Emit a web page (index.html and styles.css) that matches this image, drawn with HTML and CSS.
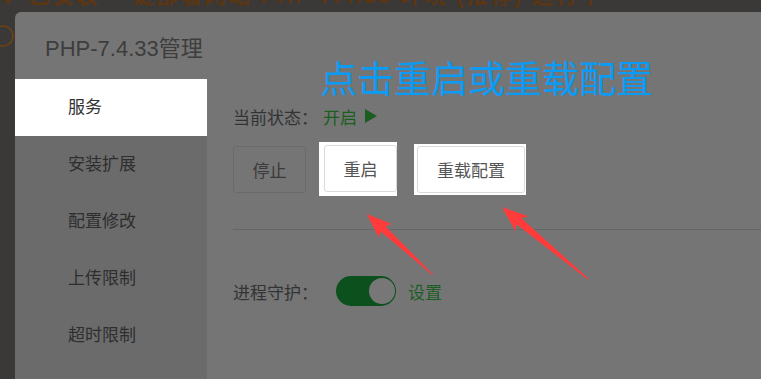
FILE: index.html
```html
<!DOCTYPE html>
<html lang="zh-CN">
<head>
    <meta charset="UTF-8">
    <meta name="viewport" content="width=device-width, initial-scale=1.0">
    <title>PHP-7.4.33管理</title>
    <link rel="stylesheet" href="styles.css">
</head>
<body>
    <div class="topbar">
        <span class="topbar-text">✓ 已安装 一键部署网站 PHP 7.4.33 环境 (推荐) 运行中</span>
    </div>
    <div class="screen">
        <div class="side-strip">
            <svg class="strip-icon" width="15" height="24" viewBox="0 0 15 24">
                <circle cx="3" cy="12" r="10" fill="none" stroke="#6e4215" stroke-width="1.5"/>
            </svg>
        </div>
        <div class="modal">
            <div class="modal-header">PHP-7.4.33管理</div>
            <div class="modal-body">
                <ul class="menu">
                    <li class="menu-item active">服务</li>
                    <li class="menu-item">安装扩展</li>
                    <li class="menu-item">配置修改</li>
                    <li class="menu-item">上传限制</li>
                    <li class="menu-item">超时限制</li>
                </ul>
                <div class="content">
                    <div class="status-row">
                        <span class="label">当前状态：</span>
                        <span class="status-on">开启</span>
                        <span class="play"></span>
                    </div>
                    <div class="button-row">
                        <button class="btn">停止</button>
                        <div class="spot spot-restart"><button class="btn btn-light">重启</button></div>
                        <div class="spot spot-reload"><button class="btn btn-light btn-wide">重载配置</button></div>
                    </div>
                    <div class="divider"></div>
                    <div class="daemon-row">
                        <span class="label">进程守护：</span>
                        <span class="switch"><span class="knob"></span></span>
                        <span class="link">设置</span>
                    </div>
                </div>
            </div>
        </div>
    </div>

    <div class="note">点击重启或重载配置</div>
    <svg class="arrows" width="761" height="379" viewBox="0 0 761 379">
        <polygon fill="#ff3b3b" transform="translate(433 275) rotate(-137.3)" points="0,-0.5 68,-3.5 65,-9.5 90,0 65,9.5 68,3.5 0,0.5"/>
        <polygon fill="#ff3b3b" transform="translate(588 279) rotate(-140.1)" points="0,-0.5 90,-4 86,-10 112,0 86,10 90,4 0,0.5"/>
    </svg>
</body>
</html>
```

FILE: styles.css
```css
body {
    margin: 0;
    width: 761px;
    height: 379px;
    overflow: hidden;
    background-color: #3a3937;
    font-family: "Liberation Sans", "Noto Sans CJK SC", sans-serif;
    position: relative;
}
.topbar {
    height: 12px;
    overflow: hidden;
    padding-left: 2px;
}
.topbar-text {
    display: block;
    margin-top: -16px;
    font-size: 22px;
    font-weight: bold;
    line-height: 24px;
    color: #5c3512;
    white-space: nowrap;
    letter-spacing: 2px;
}
.screen {
    display: flex;
    height: 367px;
}
.side-strip {
    width: 15px;
    padding-top: 12px;
}
.strip-icon {
    display: block;
}
.modal {
    flex: 1;
    background-color: #757575;
    border-top-left-radius: 6px;
    display: flex;
    flex-direction: column;
}
.modal-header {
    height: 67px;
    display: flex;
    align-items: center;
    padding-left: 30px;
    font-size: 22px;
    color: #3d3d3d;
}
.modal-body {
    flex: 1;
    display: flex;
}
.menu {
    list-style: none;
    margin: 0;
    padding: 0;
    width: 192px;
    background-color: #6b6b6b;
}
.menu-item {
    height: 57px;
    line-height: 57px;
    padding-left: 53px;
    font-size: 17px;
    color: #2e2e2e;
}
.menu-item.active {
    background-color: #fff;
    color: #333;
}
.content {
    flex: 1;
    padding-top: 26px;
    padding-left: 26px;
}
.label {
    font-size: 17px;
    color: #333;
}
.status-row {
    display: flex;
    align-items: center;
    height: 22px;
}
.status-on {
    font-size: 17px;
    color: #1a5e20;
    margin-left: 5px;
}
.play {
    width: 0;
    height: 0;
    border-top: 7px solid transparent;
    border-bottom: 7px solid transparent;
    border-left: 12px solid #1a5e20;
    margin-left: 8px;
}
.button-row {
    display: flex;
    align-items: center;
    height: 54px;
    margin-top: 15px;
}
.btn {
    width: 73px;
    height: 47px;
    border: 1px solid #6a6a6a;
    border-radius: 3px;
    background-color: transparent;
    font-family: inherit;
    font-size: 17px;
    color: #3a3a3a;
    padding: 0;
}
.spot {
    background-color: #fff;
}
.spot-restart {
    margin-left: 13px;
    padding: 3px 0 4px 5px;
}
.spot-reload {
    margin-left: 17px;
    padding: 2px 1px 2px 3px;
}
.btn-light {
    border-color: #d9d9df;
    color: #555;
    display: block;
}
.btn-wide {
    width: 108px;
}
.divider {
    height: 1px;
    background-color: #666;
    margin-top: 33px;
}
.daemon-row {
    display: flex;
    align-items: center;
    height: 30px;
    margin-top: 46px;
}
.switch {
    width: 60px;
    height: 30px;
    border-radius: 15px;
    background-color: #0c501e;
    margin-left: 18px;
    display: flex;
    justify-content: flex-end;
    align-items: center;
    padding-right: 1px;
    box-sizing: border-box;
}
.knob {
    width: 26px;
    height: 26px;
    border-radius: 50%;
    background-color: #777;
}
.link {
    font-size: 17px;
    color: #1d5e26;
    margin-left: 12px;
}
.note {
    position: absolute;
    left: 320px;
    top: 55px;
    font-size: 37px;
    line-height: 44px;
    color: #0a9bf6;
    font-family: "Noto Sans CJK SC", sans-serif;
}
.arrows {
    position: absolute;
    left: 0;
    top: 0;
}
```
